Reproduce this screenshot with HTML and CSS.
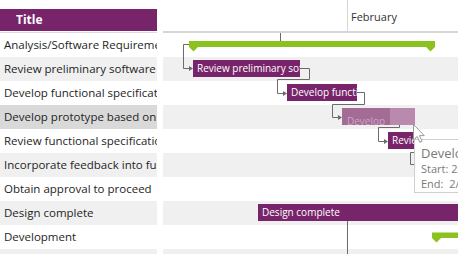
FILE: index.html
```html
<!DOCTYPE html>
<html lang="en">
<head>
  <meta charset="UTF-8">
  <title>Gantt</title>
  <link rel="stylesheet" href="styles.css">
</head>
<body>
  <div class="chart">
    <div class="grid">
      <div class="grid-head">Title</div>
      <div class="grid-line"></div>
      <div class="row">Analysis/Software Requirements</div>
      <div class="row alt">Review preliminary software specifications</div>
      <div class="row">Develop functional specifications</div>
      <div class="row selected">Develop prototype based on functional specifications</div>
      <div class="row">Review functional specifications</div>
      <div class="row alt">Incorporate feedback into functional specifications</div>
      <div class="row">Obtain approval to proceed</div>
      <div class="row alt">Design complete</div>
      <div class="row">Development</div>
      <div class="row alt"></div>
    </div>

    <div class="gantt">
      <div class="timeline">
        <div class="month-gap"></div>
        <div class="month">February</div>
      </div>
      <div class="band"></div>
      <div class="band alt"></div>
      <div class="band"></div>
      <div class="band alt"></div>
      <div class="band"></div>
      <div class="band alt"></div>
      <div class="band"></div>
      <div class="band alt"></div>
      <div class="band"></div>
      <div class="band alt"></div>

      <!-- dependency lines and summary bars -->
      <svg class="links" width="295" height="254" viewBox="0 0 295 254">
        <g fill="none" stroke="#6b6b6b" stroke-width="1">
          <path d="M117.5 33 V41"/>
          <path d="M26 44.5 H20.5 V68.5 H27"/>
          <path d="M137 68.5 H146.5 V79.5 H114.5 V93.5 H121"/>
          <path d="M194 92.5 H201.5 V104.5 H169.5 V117.5 H176"/>
          <path d="M227 116.5 H236.5 V127.5 H215.5 V141.5 H222"/>
          <path d="M254 152.5 H247.5 V164.5 H254"/>
          <path d="M184.5 221 V254"/>
        </g>
        <g fill="#6b6b6b">
          <path d="M26 66 L30 68.5 L26 71 Z"/>
          <path d="M120 91 L124 93.5 L120 96 Z"/>
          <path d="M175 115 L179 117.5 L175 120 Z"/>
          <path d="M221 139 L225 141.5 L221 144 Z"/>
        </g>
        <g fill="#8cc21f">
          <rect x="26" y="41" width="246" height="6"/>
          <path d="M26 47 H35 L30.5 51.5 Z"/>
          <path d="M263 47 H272 L267.5 51.5 Z"/>
          <rect x="269" y="232.5" width="26" height="5.5"/>
          <path d="M269 238 H278 L273.5 242.5 Z"/>
        </g>
      </svg>

      <div class="bar bar-review">Review preliminary software specifications</div>
      <div class="bar bar-func">Develop functional specifications</div>
      <div class="ghost"><span class="ghost-done"></span><span class="ghost-text">Develop</span></div>
      <div class="bar bar-rev2">Review functional</div>
      <div class="bar bar-design">Design complete</div>

      <div class="tooltip">
        <div class="tip-title">Develop prototype</div>
        <div class="tip-line">Start: 2/10/2014</div>
        <div class="tip-line">End:&nbsp; 2/12/2014</div>
      </div>

      <svg class="cursor" width="12" height="20" viewBox="0 0 12 20">
        <path d="M0.5 0.5 V16 L4.2 12.4 L6.8 18.3 L9 17.3 L6.5 11.6 H11.3 Z" fill="#fff" stroke="#9a9a9a" stroke-width="1"/>
      </svg>
    </div>
  </div>
</body>
</html>
```

FILE: styles.css
```css
body {
  margin: 0;
  width: 458px;
  height: 254px;
  overflow: hidden;
  background: #fff;
  font-family: "Open Sans", Arial, sans-serif;
  color: #1e1e1e;
}

.chart {
  display: flex;
  gap: 6px;
  height: 254px;
  overflow: hidden;
}

.grid {
  width: 157px;
  flex-shrink: 0;
  font-size: 11.5px;
}
.grid-head {
  margin-top: 9px;
  height: 22px;
  line-height: 22px;
  padding-left: 16px;
  background: #78246a;
  color: #fff;
  font-weight: bold;
  font-size: 12px;
}
.grid-line {
  margin-top: 1px;
  height: 1px;
  background: #dcdcdc;
}
.row {
  height: 24px;
  line-height: 24px;
  padding-left: 4px;
  white-space: nowrap;
  overflow: hidden;
}
.row.alt {
  background: #f0f0f0;
}
.row.selected {
  background: #d9d9d9;
}

.gantt {
  position: relative;
  flex: 1;
  height: 254px;
  overflow: hidden;
}
.timeline {
  display: flex;
  height: 31px;
  border-bottom: 2px solid #d6d6d6;
}
.month-gap {
  width: 184px;
  border-right: 1px solid #d6d6d6;
}
.month {
  padding: 9px 0 0 3px;
  font-size: 11px;
  color: #333;
}
.band {
  height: 24px;
}
.band.alt {
  background: #f0f0f0;
}

.links {
  position: absolute;
  left: 0;
  top: 0;
}

.bar {
  position: absolute;
  height: 17px;
  line-height: 17px;
  padding-left: 4px;
  box-sizing: border-box;
  background: #78246a;
  color: #fff;
  font-size: 10px;
  white-space: nowrap;
  overflow: hidden;
}
.bar-review { left: 30px; top: 60px; width: 107px; }
.bar-func { left: 124px; top: 84px; width: 70px; }
.bar-rev2 { left: 225px; top: 132px; width: 28px; }
.bar-design { left: 95px; top: 204px; width: 210px; }

.ghost {
  position: absolute;
  left: 179px;
  top: 108px;
  width: 73px;
  height: 17px;
  background: #b98aad;
  overflow: hidden;
}
.ghost-done {
  position: absolute;
  left: 0;
  top: 0;
  width: 48px;
  height: 17px;
  background: #a26c95;
}
.ghost-text {
  position: relative;
  padding-left: 5px;
  line-height: 17px;
  font-size: 10px;
  color: #cda3c3;
}

.tooltip {
  position: absolute;
  left: 251px;
  top: 139px;
  width: 80px;
  height: 54px;
  padding: 5px 0 0 6px;
  box-sizing: border-box;
  background: #fff;
  border: 1px solid #cfcfcf;
  color: #7a7a7a;
  white-space: nowrap;
}
.tip-title {
  font-size: 13px;
  line-height: 16px;
}
.tip-line {
  font-size: 11px;
  line-height: 15px;
}

.cursor {
  position: absolute;
  left: 250px;
  top: 124px;
}
```
